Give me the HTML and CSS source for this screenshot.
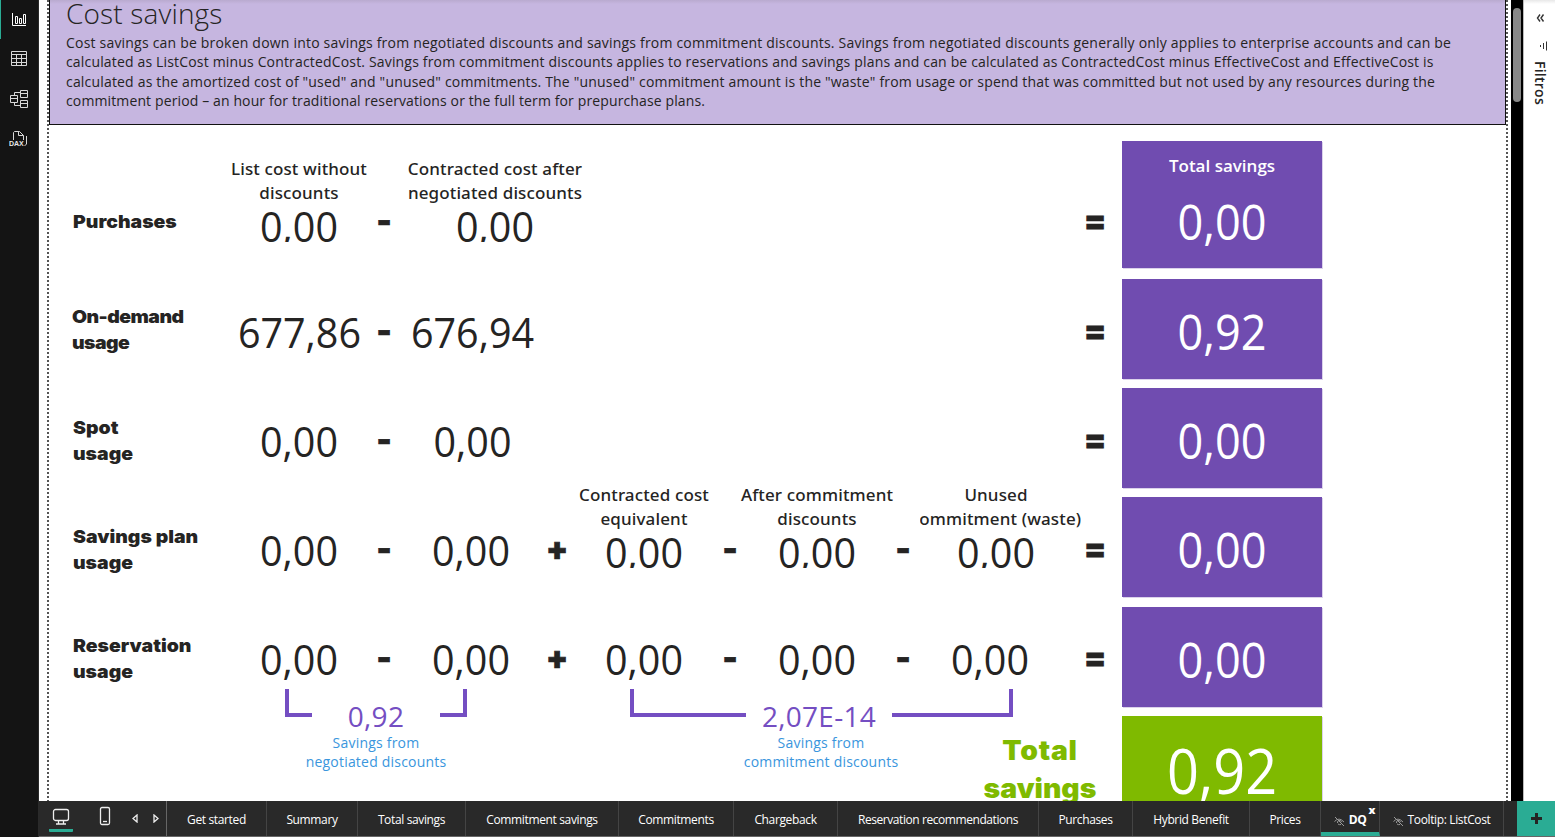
FILE: index.html
```html
<!DOCTYPE html>
<html lang="en">
<head>
<meta charset="utf-8">
<title>Cost savings</title>
<link rel="stylesheet" href="styles.css">
</head>
<body>
<div class="app">
  <nav class="rail">
    <div class="rail-item active"><svg width="18" height="18" viewBox="0 0 18 18"><path d="M2.500 2v12.500H16M5.500 5.500h2v7h-2zM9.500 7.500h2v5h-2zM13.500 3.500h2v9h-2z"/></svg></div>
    <div class="rail-item"><svg width="18" height="18" viewBox="0 0 18 18"><path d="M1.500 1.500h15v14h-15zM1.500 4.500h15M1.500 8.500h15M1.500 12.500h15M6.500 4.500v11M11.500 4.500v11"/></svg></div>
    <div class="rail-item"><svg width="20" height="20" viewBox="0 0 20 20"><path d="M1.500 6.500h7v7h-7zM1.500 9.500h7M11.500 1.500h7v7h-7zM11.500 4.500h7M11.500 11.500h7v7h-7zM11.500 14.500h7M5.500 6.500v-3h6M5.500 13.500v3h6"/></svg></div>
    <div class="rail-item"><svg width="20" height="20" viewBox="0 0 20 20"><path d="M4.500 11V3.500l1-1h5l4 4V11M9.500 2.500v4h5M17.500 7v8l-2 2"/><text x="0" y="17" class="dax">DAX</text></svg></div>
  </nav>
  <div class="workspace">
    <div class="stage">
      <main class="report">
        <section class="banner">
          <h1>Cost savings</h1>
          <p>Cost savings can be broken down into savings from negotiated discounts and savings from commitment discounts. Savings from negotiated discounts generally only applies to enterprise accounts and can be<br><span class="p2">calculated as ListCost minus ContractedCost. Savings from commitment discounts applies to reservations and savings plans and can be calculated as ContractedCost minus EffectiveCost and EffectiveCost is</span><br><span class="p3">calculated as the amortized cost of "used" and "unused" commitments. The "unused" commitment amount is the "waste" from usage or spend that was committed but not used by any resources during the</span><br><span class="p4">commitment period – an hour for traditional reservations or the full term for prepurchase plans.</span></p>
        </section>
        <div class="canvas">
          <div class="formulas">
            <div class="row first">
              <div class="label">Purchases</div>
              <div class="term tall"><div class="caption">List cost without<br>discounts</div><div class="num cut">0,00</div></div>
              <div class="op">-</div>
              <div class="term tall wide"><div class="caption">Contracted cost after<br>negotiated discounts</div><div class="num cut">0,00</div></div>
              <div class="op eq">=</div>
            </div>
            <div class="row">
              <div class="label demand">On-demand<br>usage</div>
              <div class="term num">677,86</div><div class="op">-</div><div class="term num shifted">676,94</div>
              <div class="op eq">=</div>
            </div>
            <div class="row">
              <div class="label">Spot<br>usage</div>
              <div class="term num">0,00</div><div class="op">-</div><div class="term num shifted">0,00</div>
              <div class="op eq">=</div>
            </div>
            <div class="row">
              <div class="label">Savings plan<br>usage</div>
              <div class="term num">0,00</div><div class="op">-</div><div class="term num">0,00</div><div class="op">+</div>
              <div class="term tall"><div class="caption">Contracted cost<br>equivalent</div><div class="num cut">0,00</div></div><div class="op">-</div>
              <div class="term tall"><div class="caption">After commitment<br>discounts</div><div class="num cut">0,00</div></div><div class="op">-</div>
              <div class="term tall unused"><div class="caption">Unused<br>commitment (waste)</div><div class="num cut">0,00</div></div>
              <div class="op eq">=</div>
            </div>
            <div class="row">
              <div class="label">Reservation<br>usage</div>
              <div class="term num">0,00</div><div class="op">-</div><div class="term num">0,00</div><div class="op">+</div>
              <div class="term num">0,00</div><div class="op">-</div><div class="term num">0,00</div><div class="op">-</div><div class="term num">0,00</div>
              <div class="op eq">=</div>
            </div>
            <div class="summary">
              <div class="group negotiated">
                <i class="arm left"></i><div class="sub"><div class="subnum">0,92</div><div class="subtext">Savings from<br>negotiated discounts</div></div><i class="arm right"></i>
              </div>
              <div class="group committed">
                <i class="arm left"></i><div class="sub"><div class="subnum">2,07E-14</div><div class="subtext">Savings from<br>commitment discounts</div></div><i class="arm right"></i>
              </div>
              <div class="grand"><span class="grand-total">Total</span><br>savings</div>
            </div>
          </div>
          <div class="cards">
            <div class="card head"><div class="card-title">Total savings</div><div class="figure">0,00</div></div>
            <div class="card"><div class="figure">0,92</div></div>
            <div class="card"><div class="figure">0,00</div></div>
            <div class="card"><div class="figure">0,00</div></div>
            <div class="card late"><div class="figure">0,00</div></div>
            <div class="card green"><div class="figure">0,92</div></div>
          </div>
        </div>
      </main>
      <div class="scroll"><div class="thumb"></div></div>
      <aside class="filters">
        <svg class="chev" width="9" height="10" viewBox="0 0 9 10"><path d="M4 1.500L1.500 5L4 8.500M7.500 1.500L5 5l2.500 3.500"/></svg>
        <svg class="funnel" width="10" height="10" viewBox="0 0 10 10"><path d="M8.500 .5v9M5.500 2v6M2.500 4v2"/></svg>
        <span class="filters-title">Filtros</span>
      </aside>
    </div>
    <footer class="tabs">
      <div class="views">
        <div class="view on"><svg width="18" height="18" viewBox="0 0 18 18"><rect x="1.500" y="1.500" width="15" height="11" rx="2"/><path d="M6.500 13v2.500M11.500 13v2.500M4 16h10"/></svg></div>
        <div class="view"><svg width="12" height="20" viewBox="0 0 12 20"><rect x="1.500" y="1.500" width="9" height="17" rx="1.500"/><path d="M4 15.500h4"/></svg></div>
        <svg class="arrow" width="6" height="9" viewBox="0 0 6 9"><path d="M5 1v7L1 4.500z"/></svg>
        <svg class="arrow" width="6" height="9" viewBox="0 0 6 9"><path d="M1 1v7l4-3.500z"/></svg>
      </div>
      <div class="tab t1">Get started</div>
      <div class="tab t2">Summary</div>
      <div class="tab t3">Total savings</div>
      <div class="tab t4">Commitment savings</div>
      <div class="tab t5">Commitments</div>
      <div class="tab t6">Chargeback</div>
      <div class="tab t7">Reservation recommendations</div>
      <div class="tab t8">Purchases</div>
      <div class="tab t9">Hybrid Benefit</div>
      <div class="tab t10">Prices</div>
      <div class="tab t11 current"><svg class="eye" width="11" height="11" viewBox="0 0 11 11"><path d="M.5 5.500Q5 .5 10 6M3.500 7a2 2 0 0 1 4-1M1 1l9 9M4 8q1.500 1 3 .5"/></svg><span>DQ</span><b class="close">x</b></div>
      <div class="tab t12"><svg class="eye" width="11" height="11" viewBox="0 0 11 11"><path d="M.5 5.500Q5 .5 10 6M3.500 7a2 2 0 0 1 4-1M1 1l9 9M4 8q1.500 1 3 .5"/></svg><span>Tooltip: ListCost</span></div>
      <div class="add"><svg width="11" height="11" viewBox="0 0 11 11"><path d="M5.500 0v11M0 5.500h11"/></svg></div>
    </footer>
  </div>
</div>
</body>
</html>
```
FILE: styles.css
```css
* { box-sizing: border-box; }
body { margin: 0; overflow: hidden; font-family: "Open Sans", "Noto Sans", sans-serif; color: #252423; background: #fff; }
.app { display: flex; width: 1555px; height: 837px; }

/* left rail */
.rail { width: 39px; flex: none; background: #141414; border-right: 1px solid #2a2a2a; }
.rail-item { height: 40px; display: flex; align-items: center; justify-content: center; padding-right: 2px; border-left: 1px solid transparent; }
.rail-item.active { border-left-color: #2aac94; height: 39px; }
.rail svg { fill: none; stroke: #d8d8d8; stroke-width: 1; }
.rail .active svg { stroke: #fff; }
.rail .dax { font: bold 7px "Liberation Sans", sans-serif; fill: #e8e8e8; stroke: none; }

/* report page */
.workspace { flex: 1; display: flex; flex-direction: column; min-width: 0; }
.stage { height: 801px; display: flex; overflow: hidden; }
.report {
  width: 1472px; padding: 0 3px 0 8px; overflow: hidden;
  background: repeating-linear-gradient(#555 0 2px, #fff 2px 4px) 8px 0 / 2px 100% no-repeat, repeating-linear-gradient(#555 0 2px, #fff 2px 4px) 1467px 0 / 2px 100% no-repeat;
}
.banner { width: 1457px; margin-left: 2px; height: 125px; background: linear-gradient(#b9aacf, #c6b6e0 4px); border: 1px solid #111; border-top: 0; padding: 0 0 0 16px; white-space: nowrap; overflow: hidden; }
.banner h1 { margin: 0; font-size: 28px; line-height: 26px; font-weight: 300; height: 31px; letter-spacing: .15px; }
.banner p { margin: 0; font-size: 14px; line-height: 19.3px; padding-top: 2px; letter-spacing: .201px; }
.banner .p2 { letter-spacing: .167px; }
.banner .p3 { letter-spacing: .181px; }
.banner .p4 { letter-spacing: .124px; }
.canvas { display: flex; padding: 16px 0 0 2px; }

/* savings formulas */
.formulas { width: 1073px; flex: none; }
.row { display: grid; grid-template-columns: 161px 130px 40px 134px 38px 136px 36px 138px 34px 140px 8px 54px; height: 109px; padding-left: 24px; align-items: center; }
.row.first { height: 136px; padding-top: 26px; }
.label { font: 900 18px/26px Inter, sans-serif; transform: scaleX(1.08); transform-origin: 0 0; }
.label.demand { letter-spacing: -.5px; margin: -4px 0 0 -1px; }
.term { text-align: center; white-space: nowrap; }
.num { font-size: 42px; line-height: 56px; transform: scaleX(.94); }
.shifted { margin-left: 2px; margin-right: -1px; }
.op { text-align: center; font: 900 32px/40px Inter, sans-serif; -webkit-text-stroke: .7px #252423; margin-top: -2px; }
.eq { grid-column: 12; }
.tall { align-self: start; margin-top: -12px; }
.first .tall { margin-top: -10px; }
.wide { width: 182px; }
.caption { font: 500 17px/24px "Noto Sans", "Open Sans", sans-serif; letter-spacing: .13px; margin: 0 -40px; }
.cut { height: 38px; line-height: 44px; overflow: hidden; margin-top: -1px; }
.unused { width: 152px; clip-path: inset(0 -20px 0 0); }

/* bracket totals */
.summary { display: flex; margin-top: -24px; padding-left: 236px; }
.group { display: flex; justify-content: space-between; }
.negotiated { width: 182px; }
.committed { width: 383px; margin-left: 163px; }
.arm { height: 28px; border-bottom: 4px solid #744ec2; }
.negotiated .arm { width: 27px; }
.committed .arm { width: 116px; }
.committed .arm.right { width: 121px; }
.arm.left { border-left: 4px solid #744ec2; }
.arm.right { border-right: 4px solid #744ec2; }
.sub { width: 0; display: flex; flex-direction: column; align-items: center; text-align: center; white-space: nowrap; }
.subnum { color: #744ec2; font-size: 28px; line-height: 34px; margin-top: 10px; letter-spacing: .3px; }
.subtext { color: #3a96dd; font-size: 14px; line-height: 19px; letter-spacing: .21px; }
.committed .subtext { margin-left: 4px; }
.grand { color: #7fba00; font: 900 27px/38px Inter, sans-serif; text-align: center; width: 120px; margin: 43px 0 0 -33px; transform: scaleX(1.05); }
.grand-total { letter-spacing: .7px; }

/* result cards */
.cards { width: 200px; display: flex; flex-direction: column; gap: 9px; }
.card { height: 100px; flex: none; background: #704cb0; color: #fff; font-size: 49px; line-height: 104px; text-align: center; box-shadow: 1px 1px 0 #704cb040; }
.card .figure { transform: scaleX(.92); }
.card.head { height: 127px; margin-bottom: 2px; line-height: 66px; }
.card-title { font-size: 17px; font-weight: 600; line-height: 24px; padding: 13px 0 10px; }
.card.late { margin-top: 1px; }
.card.green { background: #7fba00; font-size: 62px; line-height: 108px; }
.card.green .figure { transform: scaleX(.9); }

/* scrollbar and filter pane */
.scroll { width: 12px; background: #000; padding: 8px 2px; }
.thumb { height: 94px; border-radius: 4px; background: #888; }
.filters { width: 32px; border-left: 1px solid #bbb; display: flex; flex-direction: column; align-items: center; background: linear-gradient(#e8e8e8, #fff 4px); }
.filters svg { fill: none; stroke: #333; flex: none; }
.filters .chev { margin: 13px 0 0 2px; stroke-width: 1.4; }
.funnel { margin: 18px 0 0 7px; }
.filters-title { writing-mode: vertical-rl; font-size: 14px; font-weight: 600; line-height: 20px; letter-spacing: .25px; margin-top: 10px; }

/* page tabs */
.tabs { height: 36px; display: flex; background: #292929; border-bottom: 1px solid #666; color: #fff; font-size: 12px; letter-spacing: -.36px; white-space: nowrap; }
.views { width: 128px; display: flex; border-right: 1px solid #666; align-items: center; padding-left: 10px; }
.views svg { fill: none; stroke: #eee; stroke-width: 1.3; }
.view { height: 35px; width: 24px; display: flex; justify-content: center; padding-top: 6px; }
.view + .view { margin-left: 20px; padding-top: 5px; }
.view.on { border-bottom: 3px solid #2aac94; border-radius: 1px; height: 27px; padding-top: 3px; margin-top: -1px; }
.arrow { margin-left: 15px; }
.tab { display: flex; align-items: center; justify-content: center; border-right: 1px solid #444; position: relative; padding-top: 2px; }
.t1 { width: 100px; }
.t2 { width: 91px; }
.t3 { width: 108px; }
.t4 { width: 153px; }
.t5 { width: 115px; }
.t6 { width: 104px; }
.t7 { width: 201px; letter-spacing: -.43px; }
.t8 { width: 94px; }
.t9 { width: 117px; }
.t10 { width: 71px; }
.t11 { width: 59px; }
.t12 { width: 124px; }
.current { font-weight: 700; border-bottom: 4px solid #2aac94; padding-top: 6px; }
.eye { fill: none; stroke: #999; margin-right: 4px; margin-top: 4px; }
.close { position: absolute; right: 4px; top: 2px; font-size: 11px; line-height: 14px; }
.add { margin-left: auto; width: 38px; background: #2aac94; display: flex; align-items: center; justify-content: center; }
.add svg { stroke: #252423; stroke-width: 3; }
```
